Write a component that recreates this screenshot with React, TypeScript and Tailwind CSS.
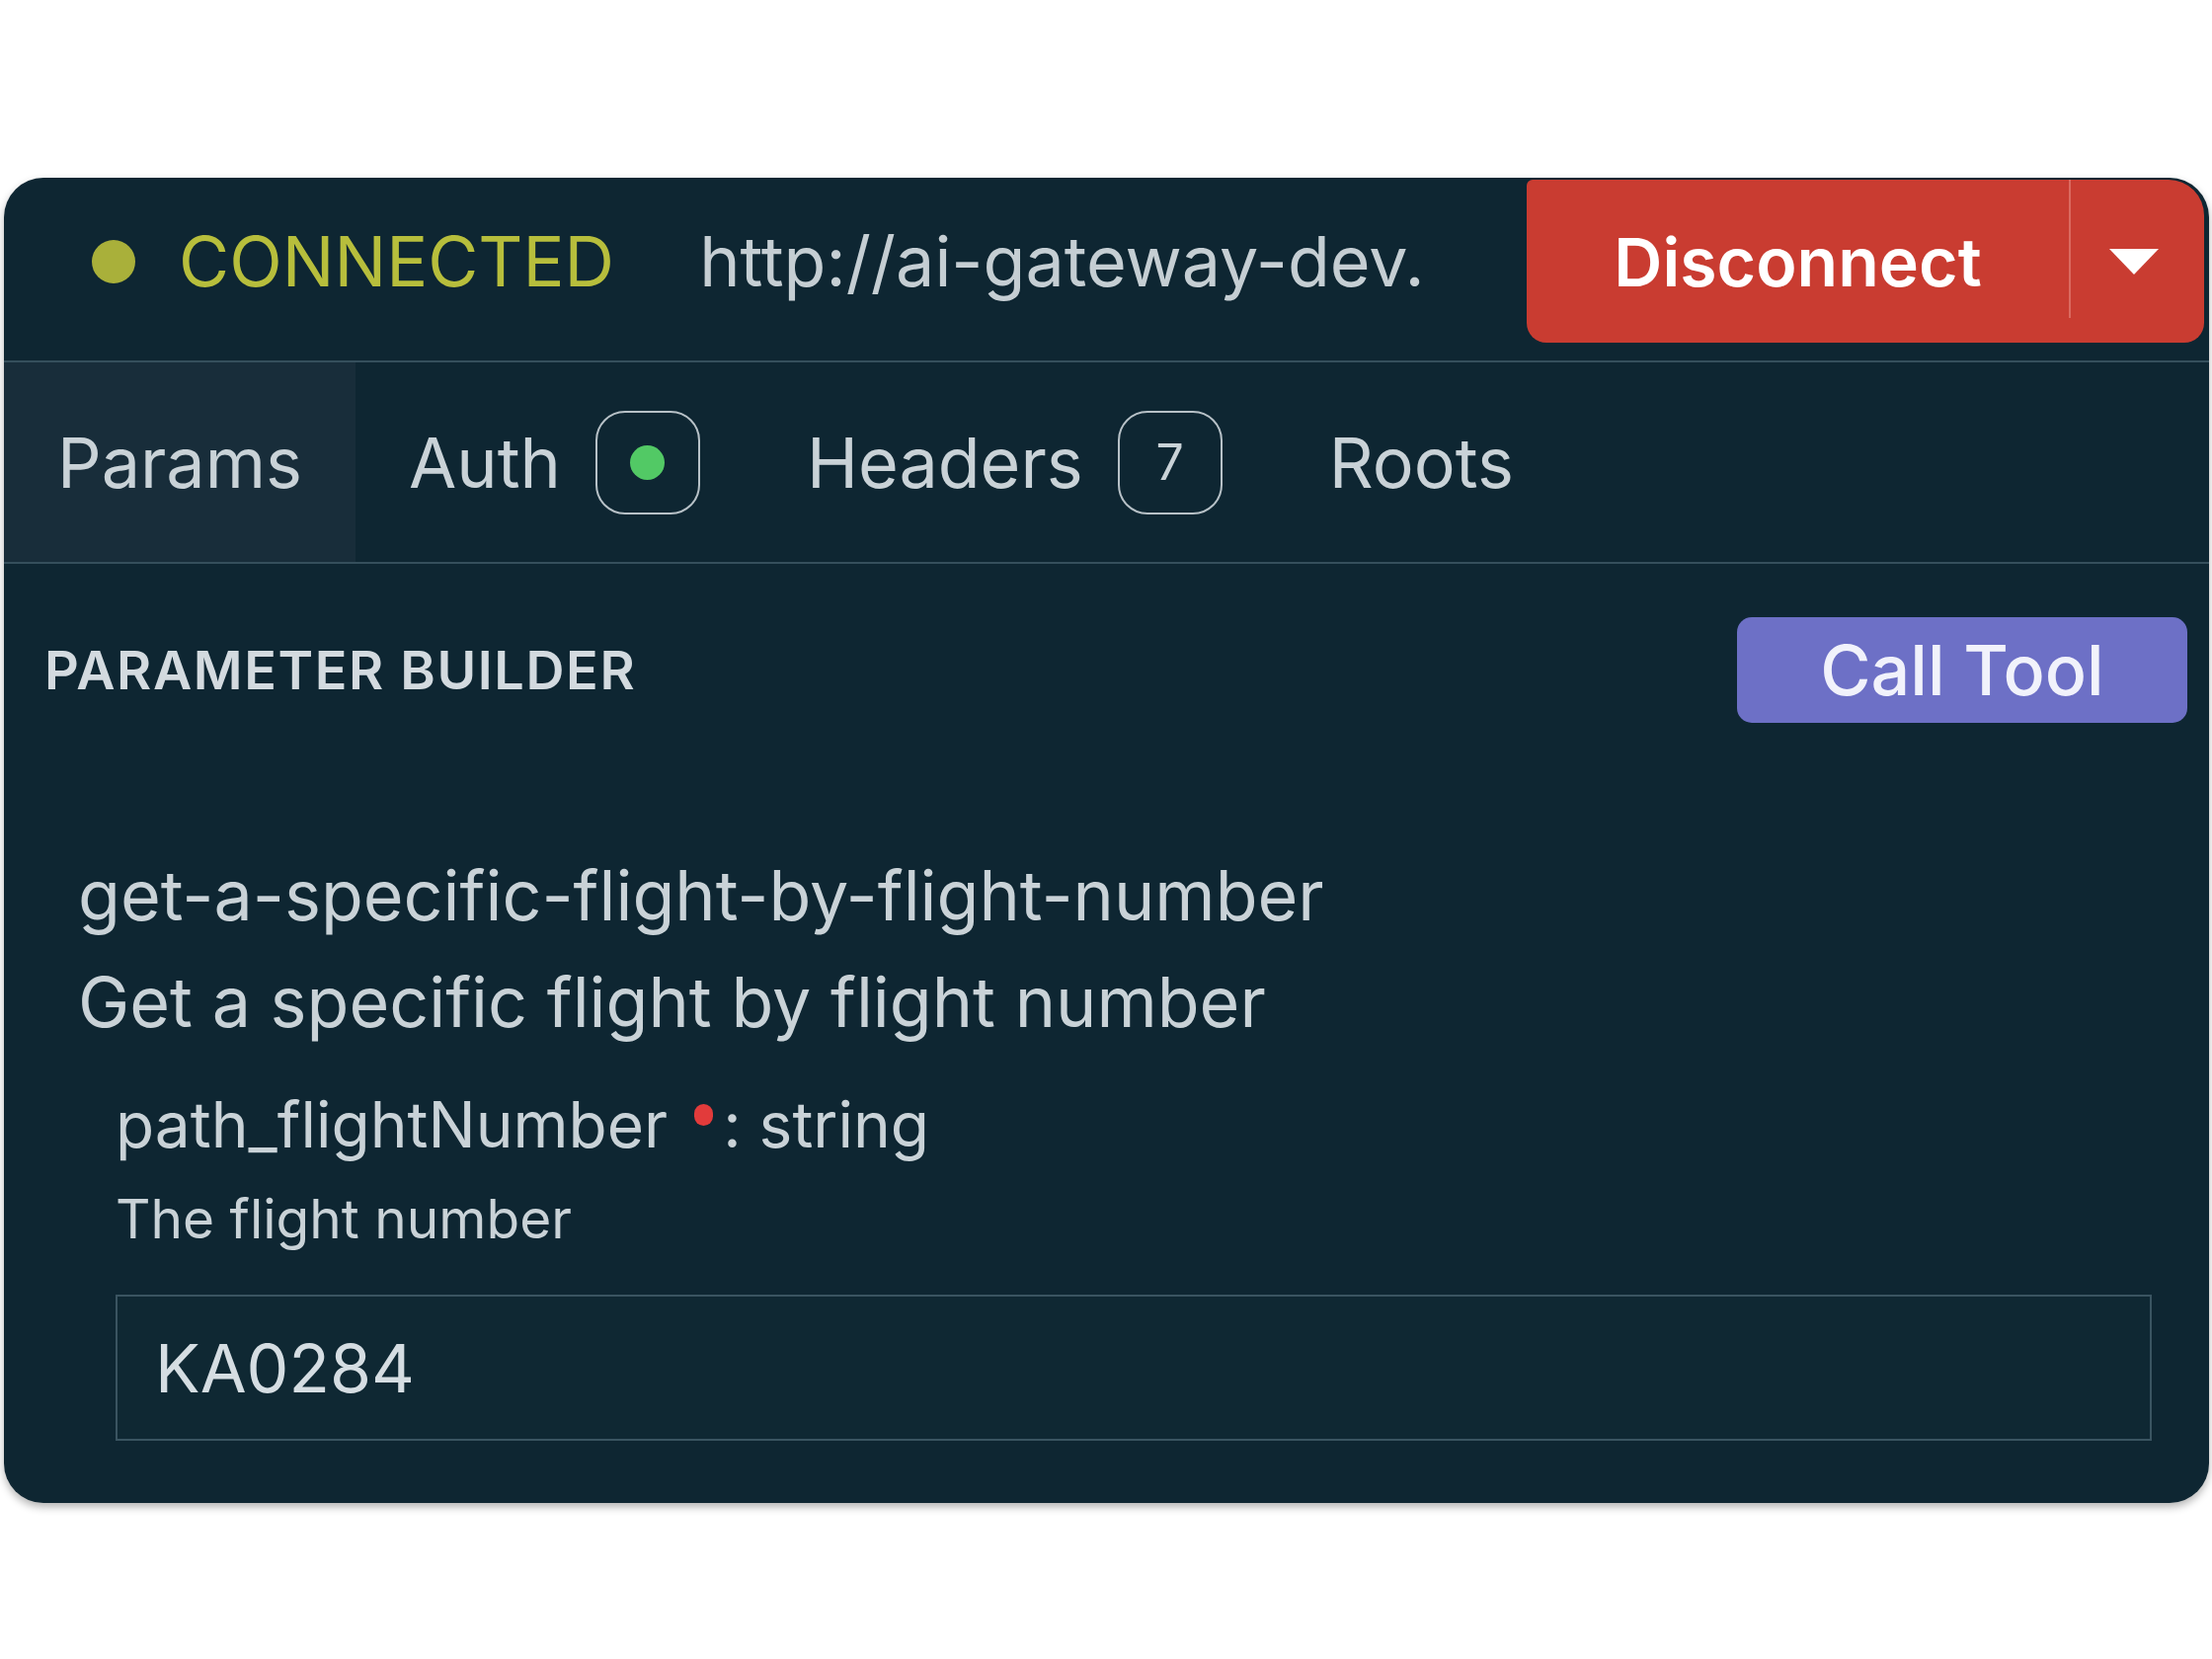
import type { ReactNode } from "react";

const FONT = "font-['Inter','Liberation_Sans',sans-serif]";

function Badge({ children }: { children: ReactNode }) {
  return (
    <span className="flex h-[105px] w-[106px] items-center justify-center rounded-[30px] border-[2.5px] border-[#b7c1c7]">
      {children}
    </span>
  );
}

function Tab({ label, badge, active }: { label: string; badge?: ReactNode; active?: boolean }) {
  return (
    <div
      className={`flex items-center gap-[35px] px-[54px] text-[70px] text-[#c9d2d7] ${
        active ? "bg-[#182d3a]" : ""
      }`}
    >
      <span>{label}</span>
      {badge}
    </div>
  );
}

export default function App() {
  return (
    <div className={`min-h-screen bg-white pt-[180px] pl-[4px] pr-[3px] ${FONT}`}>
      <div className="overflow-hidden rounded-[40px] bg-[#0e2632] pb-[63px] shadow-[0_4px_8px_rgba(0,0,0,0.3)]">
        {/* connection header */}
        <header className="flex items-center border-b-2 border-[#354f5c] pt-[2px] pb-[18px]">
          <span className="ml-[89px] h-[44px] w-[44px] rounded-full bg-[#a9b03a]" />
          <span className="ml-[44px] text-[70px] leading-none text-[#b7be3c]">CONNECTED</span>
          <span className="ml-[86px] text-[70px] leading-none text-[#c5ced3]">http://ai-gateway-dev.</span>
          <div className="mr-[5px] ml-auto flex h-[165px] w-[686px] rounded-tl-[6px] rounded-tr-[36px] rounded-br-[20px] rounded-bl-[20px] bg-[#c93c31]">
            <button
              type="button"
              className="flex w-[549px] items-center justify-center text-[68px] font-semibold text-white"
            >
              Disconnect
            </button>
            <span className="h-[140px] w-[2px] bg-[#db6a60]" />
            <button type="button" className="flex flex-1 items-center justify-center pr-[8px]" aria-label="More">
              <svg width="50" height="26" viewBox="0 0 50 26">
                <polygon points="0,0 50,0 25,26" fill="#ffffff" />
              </svg>
            </button>
          </div>
        </header>

        {/* tabs */}
        <nav className="flex h-[204px] border-b-2 border-[#354f5c]">
          <Tab label="Params" active />
          <Tab
            label="Auth"
            badge={
              <Badge>
                <span className="h-[35px] w-[35px] rounded-full bg-[#52c965]" />
              </Badge>
            }
          />
          <Tab label="Headers" badge={<Badge><span className="text-[50px] text-[#c9d2d7]">7</span></Badge>} />
          <Tab label="Roots" />
        </nav>

        {/* parameter builder */}
        <section className="pt-[54px]">
          <div className="flex items-center justify-between pr-[22px] pl-[41px]">
            <h2 className="text-[54px] font-semibold tracking-[0.03em] text-[#d3dadf]">PARAMETER BUILDER</h2>
            <button
              type="button"
              className="h-[107px] w-[456px] rounded-[15px] bg-[#6d70c6] text-[70px] font-medium text-[#f1f2fb]"
            >
              Call Tool
            </button>
          </div>

          <div className="mt-[121px] pl-[75px] text-[70px] leading-[108px] text-[#c9d2d7]">
            <p>get-a-specific-flight-by-flight-number</p>
            <p>Get a specific flight by flight number</p>
          </div>

          <div className="mt-[25px] pl-[113px] text-[64px] leading-[90px] text-[#c9d2d7]">
            path_flightNumber
            <span className="mr-[10px] mb-[22px] ml-[27px] inline-block h-[22px] w-[19px] rounded-full bg-[#e23b3b]" />
            : string
          </div>
          <p className="mt-[15px] pl-[113px] text-[55px] leading-[70px] text-[#c9d2d7]">The flight number</p>

          <div className="mt-[42px] mr-[58px] ml-[113px] flex h-[148px] items-center border-2 border-[#3a5461] bg-[#0f2833] pl-[38px]">
            <span className="text-[68px] text-[#d5dde2]">KA0284</span>
          </div>
        </section>
      </div>
    </div>
  );
}
